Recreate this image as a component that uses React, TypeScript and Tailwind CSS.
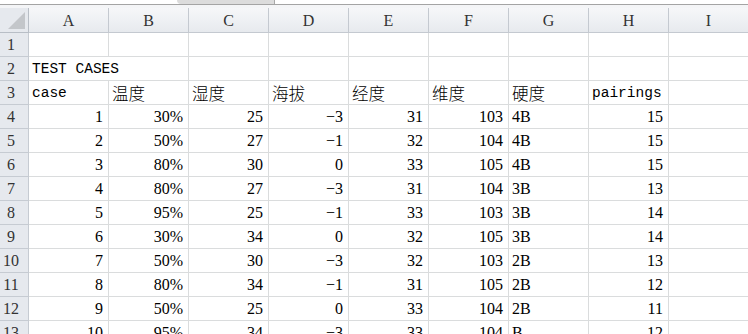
import React from 'react';

const cols = ['A', 'B', 'C', 'D', 'E', 'F', 'G', 'H', 'I'];

// test case rows 4-13
const data: (string | number)[][] = [
  [1, '30%', 25, '−3', 31, 103, '4B', 15],
  [2, '50%', 27, '−1', 32, 104, '4B', 15],
  [3, '80%', 30, '0', 33, 105, '4B', 15],
  [4, '80%', 27, '−3', 31, 104, '3B', 13],
  [5, '95%', 25, '−1', 33, 103, '3B', 14],
  [6, '30%', 34, '0', 32, 105, '3B', 14],
  [7, '50%', 30, '−3', 32, 103, '2B', 13],
  [8, '80%', 34, '−1', 31, 105, '2B', 12],
  [9, '50%', 25, '0', 33, 104, '2B', 11],
  [10, '95%', 34, '−3', 33, 104, 'B', 12],
];

const headers = ['case', '温度', '湿度', '海拔', '经度', '维度', '硬度', 'pairings'];

const serif = "font-['Liberation_Serif','Noto_Sans_CJK_SC',serif]";
const mono = "font-['Liberation_Mono','Noto_Sans_CJK_SC',monospace]";

const RowHead: React.FC<{ n: number }> = ({ n }) => (
  <div className={`h-[24px] border-r border-b border-[#c6cbd2] bg-[#e6e9ee] text-[#333] text-[16px] ${serif} flex items-center justify-center pr-[6px] pt-[1px]`}>
    {n}
  </div>
);

const DataCell: React.FC<{ v?: string; right?: boolean; cls?: string; span?: boolean }> = ({ v, right, cls = '', span }) => (
  <div
    className={`h-[24px] border-r border-b border-[#dadcdd] bg-white text-black flex items-end pb-[1px] leading-[20px] whitespace-nowrap overflow-visible ${
      right ? 'justify-end pr-[5px]' : 'justify-start pl-[3px]'
    } ${span ? 'col-span-2' : ''} ${cls}`}
  >
    {v}
  </div>
);

const App: React.FC = () => {
  const cjk = "font-['Noto_Sans_CJK_SC',sans-serif] text-[16.5px] font-light text-[#111]";
  return (
    <div className="w-[748px] h-[334px] overflow-hidden bg-white">
      {/* formula bar edge */}
      <div className="h-[8px] flex flex-col">
        <div className="h-[4px] flex">
          <div className="w-[177px]" />
          <div className="w-[98px] h-[4px] bg-[#dcdcdc] border-r border-[#a8a8a8] rounded-bl-[10px]" />
        </div>
        <div className="h-[1px] bg-[#a4a4a4]" />
        <div className="h-[3px] bg-[#f4f5f7]" />
      </div>

      <div className="grid grid-cols-[29px_repeat(9,80px)]">
        {/* corner */}
        <div className="h-[25px] border-r border-b border-[#b8bec6] bg-[#e6e9ee] relative">
          <div className="absolute right-[3px] bottom-[3px] w-0 h-0 border-l-[17px] border-l-transparent border-b-[17px] border-b-[#c3c6ca]" />
        </div>
        {cols.map((c) => (
          <div
            key={c}
            className={`h-[25px] border-r border-b border-[#c4c9d0] bg-gradient-to-b from-[#f6f7f9] to-[#e7eaee] text-[#333] text-[16px] ${serif} flex items-center justify-center pt-[1px]`}
          >
            {c}
          </div>
        ))}

        {/* row 1 */}
        <RowHead n={1} />
        {cols.map((c) => (
          <DataCell key={'r1' + c} />
        ))}

        {/* row 2 */}
        <RowHead n={2} />
        <DataCell v="TEST CASES" span cls={`${mono} text-[14.5px]`} />
        {cols.slice(2).map((c) => (
          <DataCell key={'r2' + c} />
        ))}

        {/* row 3 */}
        <RowHead n={3} />
        {headers.map((h, i) => (
          <DataCell key={'h' + i} v={h} cls={/^[a-z]/.test(h) ? `${mono} text-[14.5px]` : cjk} />
        ))}
        <DataCell />

        {data.map((row, ri) => (
          <React.Fragment key={ri}>
            <RowHead n={ri + 4} />
            {row.map((v, ci) => (
              <DataCell key={ci} v={String(v)} right={ci !== 6} cls={`${serif} text-[16px]`} />
            ))}
            <DataCell />
          </React.Fragment>
        ))}
      </div>
    </div>
  );
};

export default App;
